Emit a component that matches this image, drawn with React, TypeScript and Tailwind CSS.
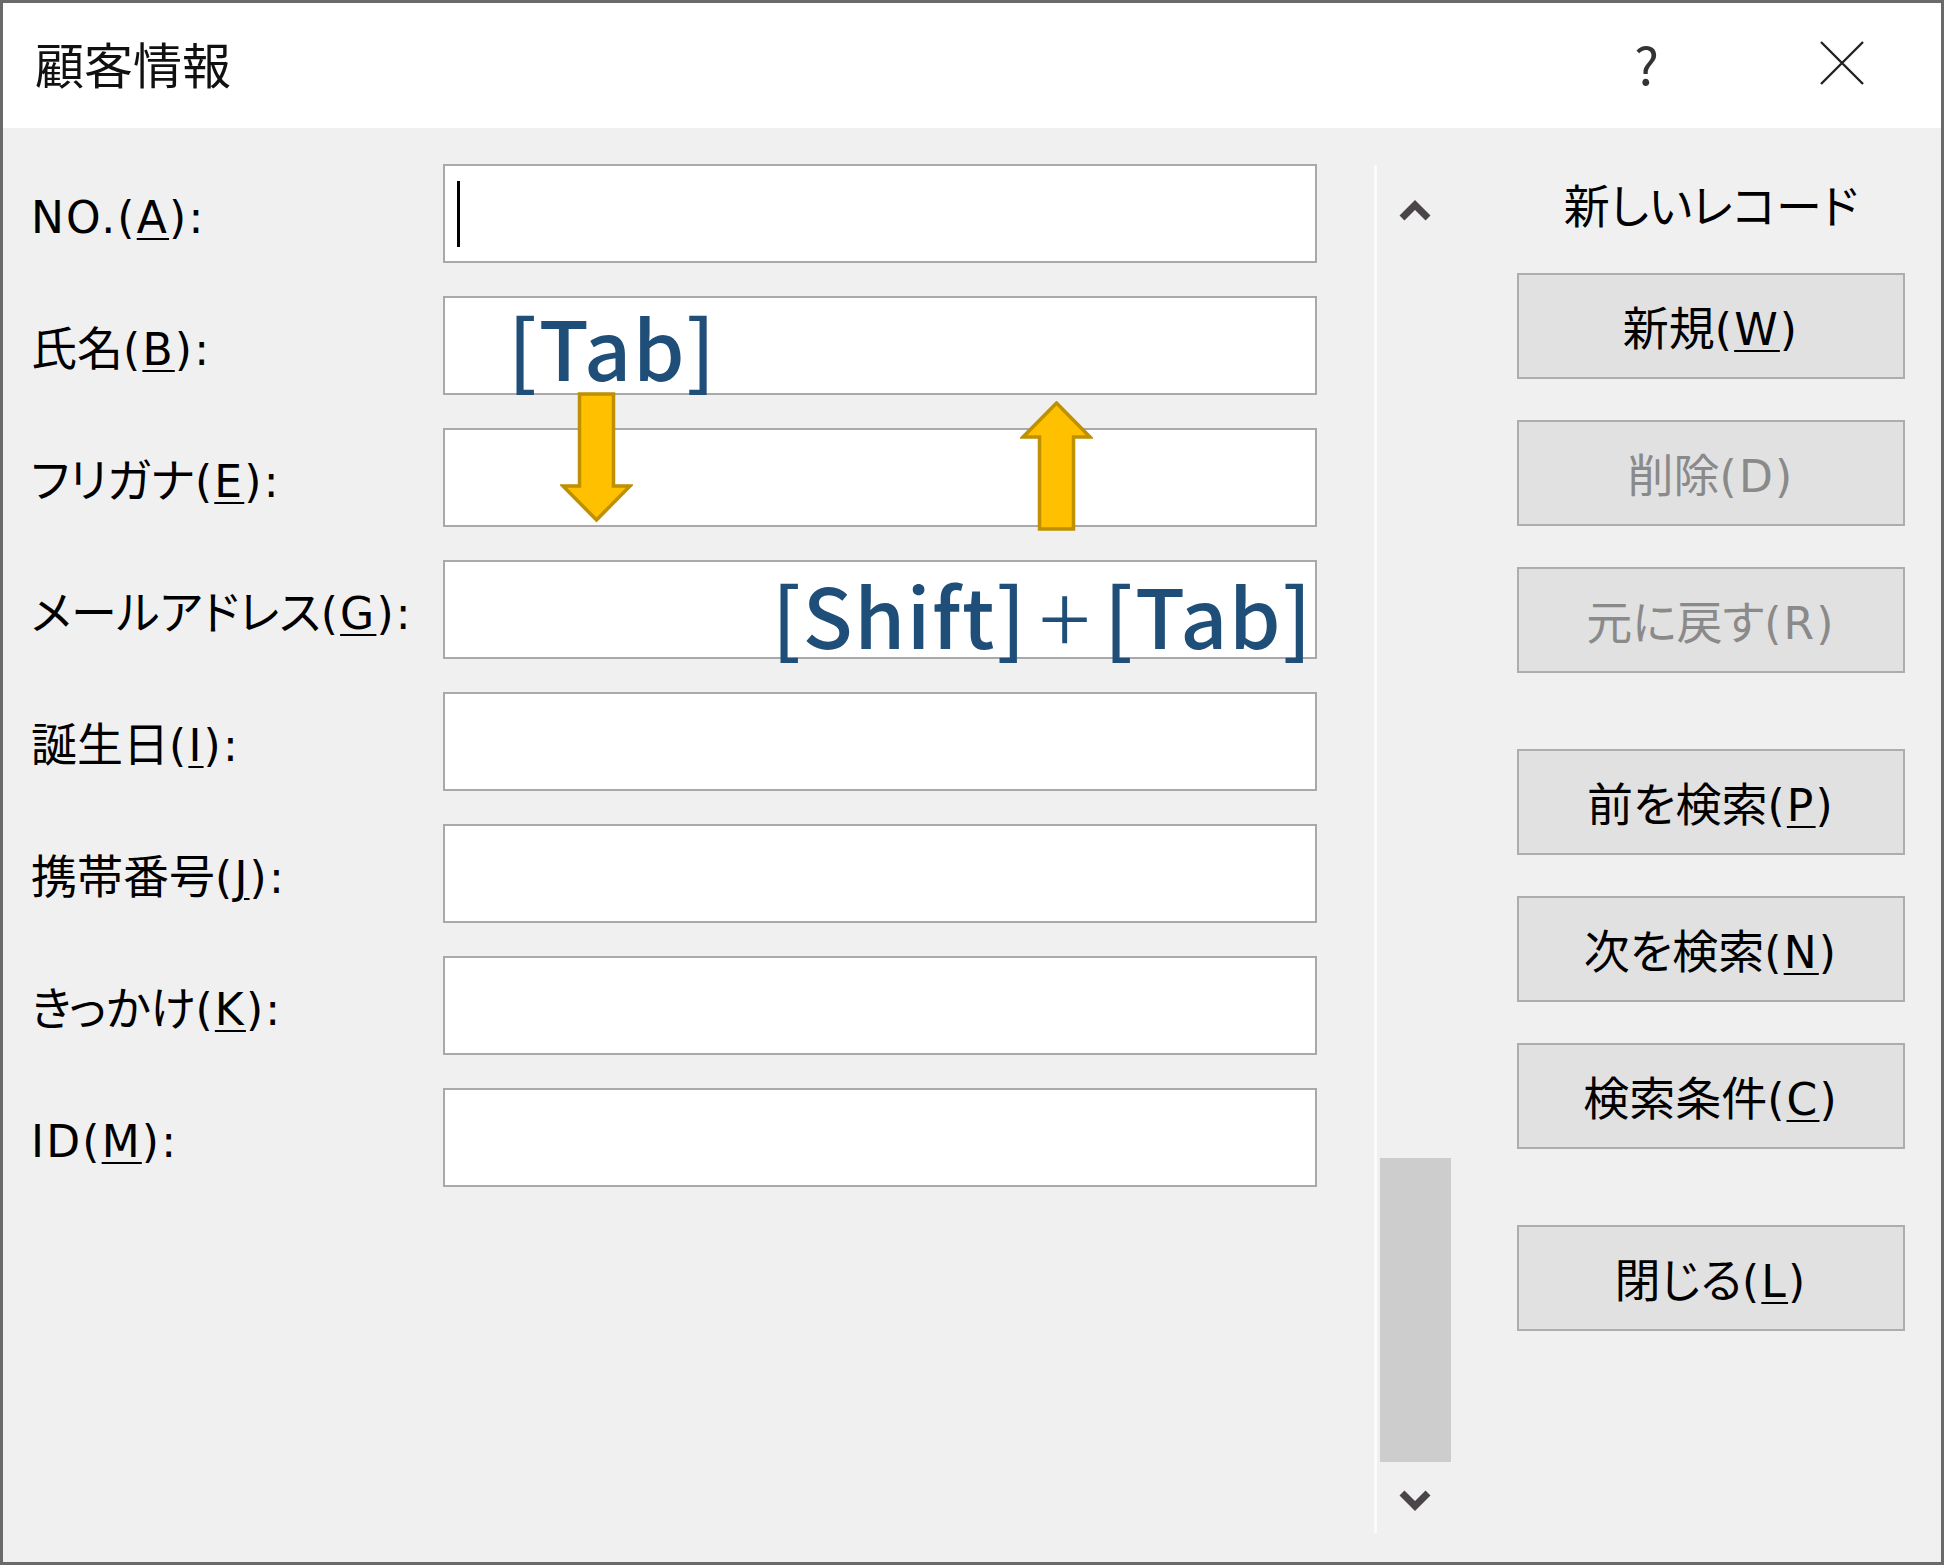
import React from "react";

type Field = { pre: string; key: string; latin?: string };

const fields: Field[] = [
  { pre: "", latin: "NO.", key: "A" },
  { pre: "氏名", key: "B" },
  { pre: "フリガナ", key: "E" },
  { pre: "メールアドレス", key: "G" },
  { pre: "誕生日", key: "I" },
  { pre: "携帯番号", key: "J" },
  { pre: "きっかけ", key: "K" },
  { pre: "", latin: "ID", key: "M" },
];

type Btn = { pre: string; key: string; disabled?: boolean; gapTop?: boolean };

const buttons: Btn[] = [
  { pre: "新規", key: "W" },
  { pre: "削除", key: "D", disabled: true },
  { pre: "元に戻す", key: "R", disabled: true },
  { pre: "前を検索", key: "P", gapTop: true },
  { pre: "次を検索", key: "N" },
  { pre: "検索条件", key: "C" },
  { pre: "閉じる", key: "L", gapTop: true },
];

const Chevron = ({ down }: { down?: boolean }) => (
  <svg width="32" height="26" viewBox="0 0 32 26">
    <path
      d={down ? "M3 6 L16 19 L29 6" : "M3 20 L16 7 L29 20"}
      fill="none"
      stroke="#4a4549"
      strokeWidth="7"
    />
  </svg>
);

// Gold arrow used to show the tab order between fields
const Arrow = ({ up, className }: { up?: boolean; className: string }) => (
  <svg
    className={className}
    width="73"
    height="131"
    viewBox="0 0 73 131"
  >
    <path
      d={
        up
          ? "M19.5 128 L53.5 128 L53.5 36 L70 36 L36.5 2 L3 36 L19.5 36 Z"
          : "M19.5 2 L53.5 2 L53.5 94 L70 94 L36.5 128 L3 94 L19.5 94 Z"
      }
      fill="#ffc000"
      stroke="#bf9000"
      strokeWidth="3.5"
    />
  </svg>
);

const Latin = ({ children }: { children: React.ReactNode }) => (
  <span className="font-['DejaVu_Sans',sans-serif] text-[44px] tracking-[0.05em]">{children}</span>
);

export default function App() {
  return (
    <div className="relative w-[1944px] h-[1565px] flex flex-col border-[3px] border-[#6a6a6a] bg-[#f0f0f0] font-['Noto_Sans_CJK_JP',sans-serif] text-black [font-feature-settings:'palt'] overflow-hidden">
      {/* title bar */}
      <div className="h-[125px] bg-white flex items-center pl-[32px] pr-[76px] pb-[6px] shrink-0">
        <span className="text-[49px] leading-none text-[#111]">顧客情報</span>
        <div className="flex-1" />
        <span className="text-[52px] leading-none text-[#333] mr-[160px]">?</span>
        <svg width="46" height="46" viewBox="0 0 46 46">
          <path d="M2 2 L44 44 M44 2 L2 44" stroke="#222" strokeWidth="2.4" />
        </svg>
      </div>

      {/* body */}
      <div className="flex-1 flex">
        <div className="flex flex-col gap-[33px] pt-[36px] pl-[28px]">
          {fields.map((f, i) => (
            <div key={f.key} className="flex items-center h-[99px]">
              <div className="w-[412px] text-[46px] leading-none pt-[2px] whitespace-nowrap">
                {f.pre}
                <Latin>
                  {f.latin}(
                  <span className="underline decoration-2 underline-offset-[5px]">{f.key}</span>
                  ):
                </Latin>
              </div>
              <div className="relative w-[874px] h-[99px] bg-white border-2 border-[#a9a9a9] flex items-center">
                {i === 0 && <div className="ml-[12px] w-[3px] h-[66px] bg-black" />}
                {i === 1 && (
                  <span className="ml-[63px] text-[82px] leading-none font-medium tracking-[0.02em] text-[#1f4e79]">
                    [Tab]
                  </span>
                )}
                {i === 3 && (
                  <span className="ml-auto mr-[2px] mt-[8px] flex items-center text-[82px] leading-none font-medium tracking-[0.02em] text-[#1f4e79] whitespace-nowrap">
                    [Shift]<span className="mx-[12px] text-[96px] font-light">+</span>[Tab]
                  </span>
                )}
              </div>
            </div>
          ))}
        </div>

        {/* scroll bar */}
        <div className="ml-[57px] mt-[37px] mb-[29px] w-[79px] border-l-[3px] border-[#fbfbfb] flex flex-col items-center pt-[33px] pb-[20px]">
          <Chevron />
          <div className="flex-1" />
          <div className="w-[71px] h-[304px] bg-[#cdcdcd]" />
          <div className="mt-[25px]">
            <Chevron down />
          </div>
        </div>

        {/* buttons */}
        <div className="ml-[64px] w-[388px] flex flex-col">
          <div className="h-[145px] pt-[4px] flex items-center justify-center text-[46px] leading-none">
            新しいレコード
          </div>
          <div className="flex flex-col gap-[41px]">
            {buttons.map((b) => (
              <div
                key={b.key}
                className={`h-[106px] bg-[#e1e1e1] border-2 border-[#adadad] flex items-center justify-center text-[46px] leading-none ${
                  b.disabled ? "text-[#8a8a8a]" : "text-black"
                } ${b.gapTop ? "mt-[35px]" : ""}`}
              >
                <span className="pt-[1px]">
                  {b.pre}
                  <Latin>
                    (
                    {b.disabled ? (
                      b.key
                    ) : (
                      <span className="underline decoration-2 underline-offset-[5px]">{b.key}</span>
                    )}
                    )
                  </Latin>
                </span>
              </div>
            ))}
          </div>
        </div>
      </div>

      {/* tab order arrows */}
      <Arrow className="absolute left-[557px] top-[389px]" />
      <Arrow up className="absolute left-[1017px] top-[398px]" />
    </div>
  );
}
